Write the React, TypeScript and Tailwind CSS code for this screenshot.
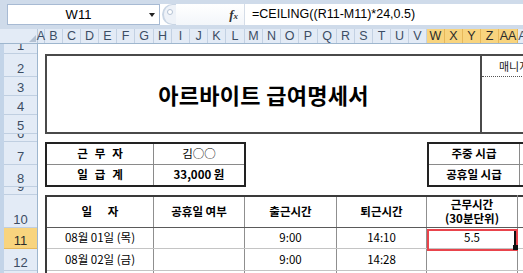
import React from "react";

const kr = "font-['Noto_Sans_CJK_KR','Noto_Sans',sans-serif]";
const ui = "font-['Liberation_Sans',Arial,sans-serif]";

const columns = [
  { label: "A", w: "w-[7px]" },
  { label: "B", w: "w-[18px]" },
  { label: "C", w: "w-[18px]" },
  { label: "D", w: "w-[18px]" },
  { label: "E", w: "w-[18px]" },
  { label: "F", w: "w-[18px]" },
  { label: "G", w: "w-[19px]" },
  { label: "H", w: "w-[18px]" },
  { label: "I", w: "w-[18px]" },
  { label: "J", w: "w-[18px]" },
  { label: "K", w: "w-[18px]" },
  { label: "L", w: "w-[19px]" },
  { label: "M", w: "w-[18px]" },
  { label: "N", w: "w-[18px]" },
  { label: "O", w: "w-[18px]" },
  { label: "P", w: "w-[19px]" },
  { label: "Q", w: "w-[19px]" },
  { label: "R", w: "w-[18px]" },
  { label: "S", w: "w-[18px]" },
  { label: "T", w: "w-[18px]" },
  { label: "U", w: "w-[18px]" },
  { label: "V", w: "w-[18px]" },
  { label: "W", w: "w-[18px]", sel: true },
  { label: "X", w: "w-[18px]", sel: true },
  { label: "Y", w: "w-[18px]", sel: true },
  { label: "Z", w: "w-[18px]", sel: true },
  { label: "AA", w: "w-[19px]", sel: true },
  { label: "AB", w: "w-[18px]" },
];

const rows = [
  { n: "1", h: "h-[10px]" },
  { n: "2", h: "h-[23px]" },
  { n: "3", h: "h-[19px]" },
  { n: "4", h: "h-[19px]" },
  { n: "5", h: "h-[19px]" },
  { n: "6", h: "h-[8px]" },
  { n: "7", h: "h-[23px]" },
  { n: "8", h: "h-[22px]" },
  { n: "9", h: "h-[8px]" },
  { n: "10", h: "h-[33px]" },
  { n: "11", h: "h-[21px]", sel: true },
  { n: "12", h: "h-[22px]" },
  { n: "13", h: "h-[22px]" },
];

function FormulaBar() {
  return (
    <div className={`${ui} bg-[#cfdbea] pt-[4px] pl-[7px] h-[29px]`}>
      <div className="flex h-[21px] bg-white">
        <div className="w-[153px] flex items-center border border-[#a7bad3] bg-white">
          <span className="flex-1 text-center text-[13px] text-black">W11</span>
          <span className="w-0 h-0 mr-[4px] border-x-[3px] border-t-[4px] border-x-transparent border-t-[#222]" />
        </div>
        <div className="w-[14px] ml-[2px] flex items-center justify-center rounded-l-full border-l-2 border-y border-[#c9d5e4] bg-[#eef2f8]">
          <span className="w-[6px] h-[6px] -mt-[5px] rounded-full border border-[#b4c2d4] bg-white" />
        </div>
        <div className="w-[68px] flex items-center justify-end pr-[6px] bg-linear-to-b from-white to-[#f3f6fa]">
          <span className="font-['Liberation_Serif',serif] italic font-bold text-[13px] text-[#333]">
            f<span className="text-[9px]">x</span>
          </span>
        </div>
        <div className="flex-1 flex items-center border-l border-[#d5dde8] pl-[7px] text-[12.5px] text-black whitespace-nowrap">
          =CEILING((R11-M11)*24,0.5)
        </div>
      </div>
    </div>
  );
}

function ColumnHeader() {
  return (
    <div className={`${ui} flex h-[15px] bg-[#e3ebf6] border-b border-[#9eb6ce]`}>
      <div className="w-[38px] shrink-0 flex items-end justify-end pr-[1px] pb-[1px] border-r border-[#b9c9dc]">
        <span className="w-0 h-0 border-b-[7px] border-l-[7px] border-b-[#b3c1d3] border-l-transparent" />
      </div>
      {columns.map((c) => (
        <div
          key={c.label}
          className={`${c.w} shrink-0 flex items-center justify-center border-r text-[12.5px] leading-none whitespace-nowrap ${
            c.sel ? "bg-[#f8d47e] border-[#e6b85a] text-[#2b2b2b]" : "border-[#c3d1e3] text-[#3c4d64]"
          }`}
        >
          {c.label}
        </div>
      ))}
    </div>
  );
}

function RowHeader() {
  return (
    <div className="flex w-[38px] shrink-0">
      <div className="w-[4px] bg-[#c3d4e8]" />
      <div className={`${ui} flex-1 flex flex-col border-r border-[#9eb6ce]`}>
        {rows.map((r) => (
          <div
            key={r.n}
            className={`${r.h} shrink-0 overflow-hidden flex items-end justify-center border-b text-[13px] leading-[13px] pb-[1px] ${
              r.sel ? "bg-[#f8d47e] border-[#e6b85a] text-[#2b2b2b]" : "bg-[#e3ebf6] border-[#c0cfe1] text-[#3c4d64]"
            }`}
          >
            {r.n}
          </div>
        ))}
      </div>
    </div>
  );
}

function TitleBox() {
  return (
    <div className="ml-[7px] h-[80px] flex border-y-2 border-l-2 border-[#4a4a4a]">
      <div className="w-[435px] shrink-0 flex items-center justify-center border-r-2 border-[#4a4a4a]">
        <span className="text-[22px] font-bold tracking-[0.3px] text-black">아르바이트 급여명세서</span>
      </div>
      <div className="w-[80px] shrink-0">
        <div className="h-[21px] flex items-center pl-[17px] border-b border-dotted border-[#555] text-[11px] text-[#222] whitespace-nowrap">
          매니저 확인
        </div>
      </div>
    </div>
  );
}

function InfoTables() {
  return (
    <div className="flex h-[45px]">
      <div className="ml-[7px] w-[201px] shrink-0 grid grid-cols-[107px_1fr] grid-rows-[21px_1fr] border-2 border-[#222] text-[11.5px] text-black">
        <div className="flex items-center justify-center border-r border-b border-[#8a8a8a] font-bold tracking-[7px] pl-[7px]">근무자</div>
        <div className="flex items-center justify-center border-b border-[#8a8a8a]">김○○</div>
        <div className="flex items-center justify-center border-r border-[#8a8a8a] font-bold tracking-[7px] pl-[7px]">일급계</div>
        <div className="flex items-center justify-center font-bold">33,000 원</div>
      </div>
      <div className="ml-[181px] w-[150px] shrink-0 grid grid-cols-[91px_1fr] grid-rows-[21px_1fr] border-y-2 border-l-2 border-[#222] text-[11.5px] text-black">
        <div className="flex items-center justify-center border-r border-b border-[#8a8a8a] font-bold">주중 시급</div>
        <div className="border-b border-[#8a8a8a]" />
        <div className="flex items-center justify-center border-r border-[#8a8a8a] font-bold">공휴일 시급</div>
        <div />
      </div>
    </div>
  );
}

const days = [
  { date: "08월 01일 (목)", start: "9:00", end: "14:10", hours: "5.5", h: "h-[21px]" },
  { date: "08월 02일 (금)", start: "9:00", end: "14:28", hours: "", h: "h-[22px]" },
  { date: "", start: "", end: "", hours: "", h: "h-[22px]" },
];

function WorkTable() {
  const cell = "flex items-center justify-center border-r border-[#8f8f8f]";
  return (
    <div className="ml-[7px] w-[600px] border-t-2 border-l-2 border-[#3a3a3a] text-[11.5px] text-black">
      <div className="grid grid-cols-[107px_91px_92px_90px_91px_1fr] h-[31px] border-b border-[#5a5a5a] font-bold">
        <div className={`${cell} whitespace-pre`}>일      자</div>
        <div className={cell}>공휴일 여부</div>
        <div className={cell}>출근시간</div>
        <div className={cell}>퇴근시간</div>
        <div className={`${cell} flex-col leading-[14px] -mt-[2px]`}>
          <span>근무시간</span>
          <span>(30분단위)</span>
        </div>
        <div className={cell} />
      </div>
      {days.map((d, i) => (
        <div key={i} className={`grid grid-cols-[107px_91px_92px_90px_91px_1fr] ${d.h} border-b border-[#c4c4c4]`}>
          <div className={cell}>{d.date}</div>
          <div className={cell} />
          <div className={cell}>{d.start}</div>
          <div className={cell}>{d.end}</div>
          <div className={`${cell} relative`}>
            {d.hours}
            {i === 0 && (
              <>
                <div className="absolute left-0 -right-[1px] top-[1px] -bottom-[3px] border-2 border-[#e9444c] z-10" />
                <div className="absolute right-[1px] top-[3px] bottom-[0px] w-[2px] bg-[#111] z-20" />
                <div className="absolute -right-[1px] -bottom-[2px] w-[5px] h-[5px] bg-[#111] z-20" />
              </>
            )}
          </div>
          <div className={cell} />
        </div>
      ))}
    </div>
  );
}

export default function App() {
  return (
    <div className={`${kr} w-[523px] h-[273px] overflow-hidden bg-white`}>
      <FormulaBar />
      <ColumnHeader />
      <div className="flex">
        <RowHeader />
        <div className="flex-1 flex flex-col">
          <div className="h-[10px]" />
          <TitleBox />
          <div className="h-[8px]" />
          <InfoTables />
          <div className="h-[8px]" />
          <WorkTable />
        </div>
      </div>
    </div>
  );
}
